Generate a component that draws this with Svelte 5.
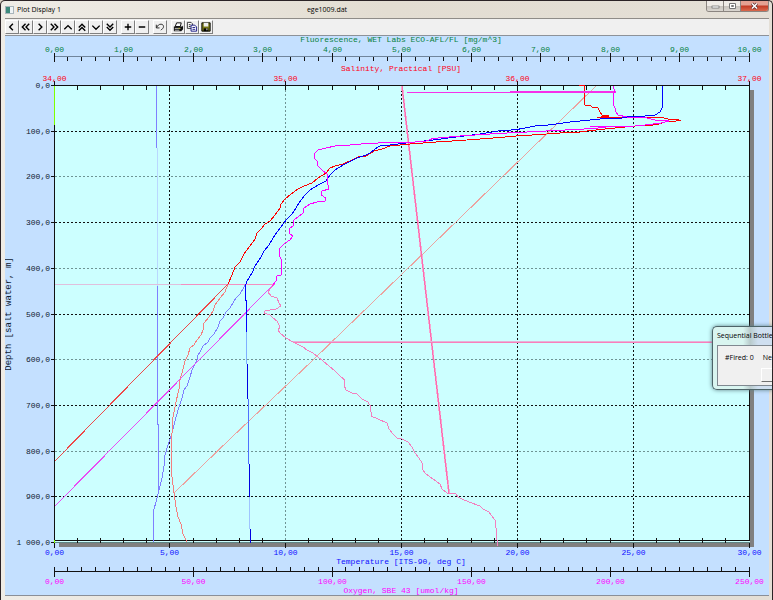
<script lang="ts">
	type Tick = { at: number; major: boolean; label: string };
	type Trace = { color: string; points: string; width?: number };

	// plot frame inside the drawing
	const left = 54.5;
	const right = 749.5;
	const top = 85.5;
	const bottom = 542.5;

	function format(value: number, digits: number) {
		const [whole, part] = value.toFixed(digits).split('.');
		return `${whole.replace(/\B(?=(\d{3})+$)/g, ' ')},${part}`;
	}

	function axis(min: number, max: number, divisions: number, every: number): Tick[] {
		return Array.from({ length: divisions + 1 }, (_, i) => ({
			at: Math.floor(left + ((right - left) * i) / divisions - 0.5) + 0.5,
			major: i % every === 0,
			label: format(min + ((max - min) * i) / divisions, 2)
		}));
	}

	const fluorescence = axis(0, 10, 50, 5);
	const salinity = axis(34, 37, 30, 10);
	const temperature = axis(0, 30, 30, 5);
	const oxygen = axis(0, 250, 50, 10);

	const depths = Array.from({ length: 11 }, (_, i) => ({
		at: Math.round(top + ((bottom - top) * i) / 10 - 0.5) + 0.5,
		label: format(i * 100, 1),
		faint: i > 0 && i % 2 === 0
	}));

	const traces: Trace[] = [
		// pump and time lines
		{ color: '#7f7fff', points: '156.5,86 156.5,148' },
		{ color: '#b9d8ff', points: '157.5,148 157.5,286' },
		{ color: '#7f7fff', points: '157.5,286 157.5,424 158.5,425 158.5,490' },
		{ color: '#e0bfdc', points: '55,284.5 181,284.5' },
		{ color: '#f48fc0', points: '181,284.5 275,284.5' },
		{ color: '#eba3a0', points: '174,493 230,439 313,360 460,218 596,86' },
		// upcast
		{
			color: '#7f7fff',
			points:
				'246,284 240,294 236,298 230,308 226,312 223,318 220,321 218,327 214,334 210,338 208,342 203,346 200,352 198,355 197,360 192,370 190,377 187,386 184,390 182,398 178,410 175,421 172,433 169,442 165,455 164,466 162,478 159,490 156,502 154,509 153,516 153,542'
		},
		{
			color: '#f47f7f',
			points:
				'228,284 225,292 220,298 215,305 213,311 209,317 204,323 203,330 201,335 197,340 194,345 190,348 188,355 185,361 183,369 180,380 179,389 176,402 174,412 172,423 172,433 171,447 171,460 172,477 174,493 176,507 178,517 181,524 183,534 187,542'
		},
		{
			color: '#f47fbf',
			points:
				'275,284 271,288 268,292 271,296 277,298 279,303 281,306 276,309 265,311 264,313 270,315 273,318 277,321 280,327 278,330 280,333 286,338 293,342 299,345 303,347 307,350 313,353 318,357 323,361 329,366 335,371 338,374 341,377 345,380 344,385 346,390 352,393 357,394 362,399 368,402 371,407 370,411 372,413 371,416 378,419 387,423 389,429 393,434 397,438 402,439 408,442 412,447 415,453 419,458 422,463 422,469 426,474 433,479 440,484 442,489 447,493 456,494 458,497 462,499 469,502 480,506 483,509 489,512 492,516 495,520 496,528 497,540 498,546'
		},
		{ color: '#f9a6d0', width: 2, points: '402,86 449,493' },
		{ color: '#fb6cb0', points: '402,86 449,493' },
		{ color: '#f97fbb', points: '293,342.5 753,342.5' },
		{ color: '#e5b3d8', points: '293,341.5 753,341.5' },
		// lines back to the left axis
		{ color: '#ee4848', points: '228,284 55,461' },
		{ color: '#e94cf4', points: '272,286 55,506' },
		// downcast salinity
		{
			color: '#ff0000',
			points:
				'579,85.5 584.5,85.5 584.5,105 591,106 592,107 598,108 600,112 602,115 609,116 597,117.5 662,117.5 668,119 675,119 681,120.5 665,122 659,124 650,125.5 635,126 620,127.5 600,129.5 587,131 577,132.5 560,133 540,134.5 516,136 500,137.5 480,139 460,140.5 436,142 410,144 390,146 382,149 374,151 366,156 358,157 352,160 343,164 335,166 330,168 326,173 318,178 312,183 304,186 298,189 291,194 285,199 281,204 280,208 275,215 270,221 265,224 262,228 257,233 255,239 250,246 246,251 243,256 240,262 235,267 232,275 228,284'
		},
		// downcast temperature
		{
			color: '#0000ff',
			points:
				'662.5,86 662.5,107 660,112 655,115 645,116 632,116 622,118 608,118 596,119.5 585,120.5 570,122 560,123.5 548,125 540,125 530,127 517,129.5 498,131 480,134 460,136.5 433,140 415,142 402,143.5 390,145 380,146 375,149 370,153 366,155 357,158 351,161 343,165 335,170 330,175 326,181 318,185 310,190 304,196 299,203 296,208 292,214 287,219 284,223 277,232 273,238 269,245 264,251 261,257 255,266 252,273 247,281 245.5,285 245.5,300 246.5,301 246.5,332'
		},
		{ color: '#7fafff', points: '246.5,332 246.5,364' },
		{ color: '#0000e0', points: '247.5,364 247.5,399' },
		{ color: '#5070ff', points: '248.5,399 248.5,464' },
		{ color: '#0000e0', points: '249.5,464 249.5,497' },
		{ color: '#9fc4ff', points: '249.5,497 249.5,529' },
		{ color: '#0000e0', points: '250.5,529 250.5,543' },
		// downcast oxygen
		{ color: '#f531e8', points: '407,92.5 616,92.5' },
		{ color: '#f531e8', points: '510,91.5 616,91.5' },
		{
			color: '#ff00ff',
			points:
				'613.5,86 614.5,91 613.5,96 613.5,105 615,108 616,112 618,115 627,117 647,118 655,120 669,121 661,123 645,125 635,126 590,126.5 606,127.5 590,128.5 579,129.5 552,130.5 540,131.5 515,132.5 490,134 460,136 433,138.5 426,141 410,142.5 390,142.5 367,143.5 350,145 335,146 326,148 318,150 314,154 314,158 317,161 317,165 322,170 327,174 327,181 329,189 322,191 321,195 326,198 325,201 317,202 310,204 304,208 303,213 298,217 294,220 293,226 289,229 290,234 293,236 290,240 285,243 279,249 279,255 281,259 281,275 277,276 276,281 272,286'
		}
	];

	const groups = [
		['back', 'fastback', 'forward', 'fastforward', 'up', 'fastup', 'down', 'fastdown'],
		['plus', 'minus'],
		['undo'],
		['print', 'copy', 'save']
	];

	const names: Record<string, string> = {
		back: 'Scroll left',
		fastback: 'Scroll left fast',
		forward: 'Scroll right',
		fastforward: 'Scroll right fast',
		up: 'Scroll up',
		fastup: 'Scroll up fast',
		down: 'Scroll down',
		fastdown: 'Scroll down fast',
		plus: 'Zoom in',
		minus: 'Zoom out',
		undo: 'Undo zoom',
		print: 'Print',
		copy: 'Copy',
		save: 'Save'
	};

	const strokes: Record<string, string> = {
		back: 'M7.5 3 4 6.5l3.500 3.500',
		fastback: 'M6 3 2.500 6.500 6 10M10 3 6.500 6.500 10 10',
		forward: 'M5 3l3.500 3.500L5 10',
		fastforward: 'M3 3l3.500 3.500L3 10M7 3l3.500 3.500L7 10',
		up: 'M2.500 9 6.500 5l4 4',
		fastup: 'M3 7 6.500 3.500 10 7M3 10.500 6.500 7l3.500 3.500',
		down: 'M2.500 5l4 4 4-4',
		fastdown: 'M3 3l3.500 3.500L10 3M3 6.500 6.500 10 10 6.500',
		plus: 'M6.500 3v7M3 6.500h7',
		minus: 'M3 6.500h7'
	};
</script>

<main class="window">
	<header class="titlebar">
		<svg class="appicon" viewBox="0 0 9 8" aria-hidden="true">
			<rect width="9" height="8" fill="#a9b5bb" />
			<rect x="1" y="1" width="4" height="6" fill="#3c8a7c" />
			<rect x="5" y="1" width="3" height="6" fill="#eef3f5" />
		</svg>
		<h1>Plot Display 1</h1>
		<span class="file">ege1009.dat</span>
		<div class="controls">
			<button class="control" aria-label="Minimize">
				<svg viewBox="0 0 9 8"><rect x="1" y="4" width="7" height="2" fill="#fff" stroke="#555" stroke-width=".6" /></svg>
			</button>
			<button class="control" aria-label="Restore">
				<svg viewBox="0 0 9 8"><path d="M1.500 1.500h6v5h-6z" fill="#fff" stroke="#777" /><path d="M3.500 3.500h2v1h-2z" fill="none" stroke="#777" /></svg>
			</button>
			<button class="control control--close" aria-label="Close">
				<svg viewBox="0 0 9 8"><path d="M2 1.500l5 5M7 1.500l-5 5" stroke="#5b2a2a" stroke-width="3" /><path d="M2 1.500l5 5M7 1.500l-5 5" stroke="#fff" stroke-width="1.600" /></svg>
			</button>
		</div>
	</header>

	<div class="toolbar" role="toolbar" aria-label="Plot tools">
		{#each groups as group}
			<div class="group">
				{#each group as name}
					<button class="tool" aria-label={names[name]}>
						<svg viewBox="0 0 13 13" aria-hidden="true">
							{#if strokes[name]}
								<path d={strokes[name]} fill="none" stroke="#000" stroke-width="1.500" />
							{:else if name === 'undo'}
								<path d="M2.500 4v3.500H6M2.800 7.200C4 4.500 5.500 3.500 7.500 3.500 10.500 3.500 11 6.500 9.500 8L7.500 10" fill="none" stroke="#222" />
							{:else if name === 'print'}
								<path d="M5 2h5L9 6H3.500z" fill="#fff" stroke="#000" />
								<path d="M2 6h9l1-1v4l-2 2H2z" fill="#111" />
								<path d="M3 8h6M3 10h5" stroke="#c9c9c9" />
								<path d="M7 8h2" stroke="#b5b520" />
							{:else if name === 'copy'}
								<path d="M1.500 1.500h4l1.500 1.500v5H1.500z" fill="#fff" stroke="#333" />
								<path d="M3 4h2M3 6h2" stroke="#222" />
								<path d="M5.500 4.500h4L11.500 6.500v4.500h-6z" fill="#fff" stroke="#101080" />
								<path d="M7 7h3M7 9h3" stroke="#101080" />
							{:else}
								<path d="M2 2h9v9H2z" fill="#777716" stroke="#000" />
								<rect x="4" y="2" width="5" height="4" fill="#eee" />
								<rect x="4" y="8" width="5" height="3" fill="#000" />
								<rect x="7" y="8" width="1" height="2" fill="#fff" />
							{/if}
						</svg>
					</button>
				{/each}
			</div>
		{/each}
	</div>

	<section class="plot">
		<svg class="chart" viewBox="5 36 764 559" role="img" aria-label="CTD profile against depth">
			<g shape-rendering="crispEdges">
				<path d="M59 543h691V90h4v457H59z" fill="#808080" />
				<rect x="54" y="85" width="696" height="458" fill="#ccffff" />

				<g class="grid">
					{#each depths.slice(1, 10) as depth}
						<line class:faint={depth.faint} x1={left} x2={right} y1={depth.at} y2={depth.at} />
					{/each}
					{#each temperature.filter((t) => t.major).slice(1, 6) as tick, i}
						<line class:faint={i === 1} x1={tick.at} x2={tick.at} y1={top} y2="540" />
					{/each}
				</g>

				<line x1="54" x2="750" y1="542.5" y2="542.5" stroke="#5f8585" />

				<g class="rules">
					<path class="soft" d="M54 56.5H750" />
					{#each fluorescence as tick}
						<line x1={tick.at} x2={tick.at} y1={tick.major ? 53 : 57} y2={tick.major ? 62 : 61} />
					{/each}
					<path d="M54 85.500H750M749.500 85V541" />
					{#each salinity as tick}
						<line x1={tick.at} x2={tick.at} y1={tick.major ? 81 : 86} y2="90" />
					{/each}
					<path d="M54.500 85V548M54 540.500H750" />
					{#each temperature as tick}
						<line x1={tick.at} x2={tick.at} y1={tick.major ? 543 : 538} y2={tick.major ? 548 : 543} />
					{/each}
					<path d="M54 571.500H750" />
					{#each oxygen as tick}
						<line x1={tick.at} x2={tick.at} y1="567" y2={tick.major ? 577 : 571} />
					{/each}
					{#each depths as depth}
						<line x1="51" x2="54" y1={depth.at} y2={depth.at} />
					{/each}
				</g>

				{#each traces as trace}
					<polyline points={trace.points} fill="none" stroke={trace.color} stroke-width={trace.width ?? 1} />
				{/each}
				<path d="M54.500 86V125M54.500 540V543" stroke="#7fff00" />
			</g>

			<g class="labels labels--green">
				<text x="401" y="42">Fluorescence, WET Labs ECO-AFL/FL [mg/m^3]</text>
				{#each fluorescence.filter((t) => t.major) as tick}
					<text x={tick.at} y="52">{tick.label}</text>
				{/each}
			</g>
			<g class="labels labels--red">
				<text x="401" y="71">Salinity, Practical [PSU]</text>
				{#each salinity.filter((t) => t.major) as tick}
					<text x={tick.at} y="81">{tick.label}</text>
				{/each}
			</g>
			<g class="labels labels--blue">
				{#each temperature.filter((t) => t.major) as tick}
					<text x={tick.at} y="555">{tick.label}</text>
				{/each}
				<text x="401" y="564">Temperature [ITS-90, deg C]</text>
			</g>
			<g class="labels labels--magenta">
				{#each oxygen.filter((t) => t.major) as tick}
					<text x={tick.at} y="584">{tick.label}</text>
				{/each}
				<text x="401" y="593">Oxygen, SBE 43 [umol/kg]</text>
			</g>
			<g class="labels labels--depth">
				{#each depths as depth}
					<text x="50" y={depth.at + 2.5}>{depth.label}</text>
				{/each}
			</g>
			<text class="depth" transform="translate(11 314) rotate(-90)">Depth [salt water, m]</text>
		</svg>

		<aside class="dialog">
			<h2>Sequential Bottle</h2>
			<div class="dialog__body">
				<div class="dialog__row">
					<span>#Fired: 0</span>
					<span>Ne</span>
				</div>
				<button class="fire" aria-label="Fire bottle"></button>
			</div>
		</aside>
	</section>
</main>

<style>
	:global(body) {
		margin: 0;
		background: #d8d0c4;
	}

	.window {
		box-sizing: border-box;
		position: relative;
		overflow: hidden;
		padding: 0 3px 4px 4px;
		border: 1px solid #2b2326;
		border-bottom: 0;
		border-radius: 5px 5px 0 0;
		background: linear-gradient(90deg, #efece6, #e3ddd2 50%, #e4dfd6);
		font-family: 'Open Sans', 'Noto Sans', sans-serif;
		font-size: 7px;
		color: #000;
	}

	.titlebar {
		display: grid;
		grid-template-columns: 9px 1fr auto 1fr;
		align-items: center;
		gap: 3px;
		height: 17px;
		border-bottom: 1px solid #8f8c88;
	}
	.appicon {
		width: 9px;
		height: 8px;
	}
	h1,
	h2 {
		margin: 0;
		font-size: 7px;
		font-weight: 400;
		line-height: 10px;
		white-space: nowrap;
	}
	.file {
		margin-right: 132px;
	}
	.controls {
		position: absolute;
		top: 0;
		right: 3px;
		display: flex;
		border: 1px solid #8b8580;
		border-top: 0;
		border-radius: 0 0 3px 3px;
		overflow: hidden;
	}
	.control {
		display: grid;
		place-items: center;
		width: 17px;
		height: 10px;
		padding: 0;
		border: 0;
		border-right: 1px solid #8b8580;
		background: linear-gradient(#efebe6 45%, #c7c2bc 50%, #dad6d0);
	}
	.control svg {
		width: 9px;
		height: 8px;
	}
	.control--close {
		width: 27px;
		border-right: 0;
		background: linear-gradient(#e4a192 40%, #c23b25 50%, #d9694d);
	}

	.toolbar {
		display: flex;
		gap: 4px;
		height: 16px;
		align-items: center;
		border-bottom: 1px solid #8d9299;
		background: #f0f0f0;
	}
	.group {
		display: flex;
	}
	.tool {
		box-sizing: border-box;
		width: 14px;
		height: 14px;
		padding: 0;
		border: 1px solid;
		border-color: #fff #808080 #808080 #fff;
		background: #f0f0f0;
	}
	.tool svg {
		display: block;
		width: 12px;
		height: 12px;
	}

	.plot {
		position: relative;
		background: #c4e0ff;
		border-bottom: 1px solid #8a8f98;
	}
	.chart {
		display: block;
		width: 100%;
	}
	.grid line {
		stroke: #111;
		stroke-dasharray: 2 2;
	}
	.grid .faint {
		stroke: #6f9494;
	}
	.rules {
		stroke: #111;
	}
	.rules .soft {
		stroke: #70859c;
	}
	.labels {
		font-family: 'Liberation Mono', monospace;
		font-size: 8px;
		text-anchor: middle;
	}
	.labels--green {
		fill: #078040;
	}
	.labels--red {
		fill: #ff0018;
	}
	.labels--blue {
		fill: #1010ff;
	}
	.labels--magenta {
		fill: #ff00ff;
	}
	.labels--depth {
		fill: #102030;
		text-anchor: end;
	}
	.depth {
		font-family: 'Liberation Mono', monospace;
		font-size: 9px;
		text-anchor: middle;
		fill: #102030;
	}

	/* floats over the right edge and runs off the screen */
	.dialog {
		box-sizing: border-box;
		position: absolute;
		top: 290px;
		right: -4px;
		width: 61px;
		height: 64px;
		padding: 4px 0 4px 4px;
		border: 1px solid #4d6468;
		border-right: 0;
		border-radius: 5px 0 0 5px;
		overflow: hidden;
		background: linear-gradient(90deg, #d9f5f0 50%, #b9cbcc 62%, #cfdff0 75%);
		box-shadow: 0 0 4px #5f7f86;
	}
	.dialog__body {
		height: 39px;
		margin-top: 4px;
		border: 1px solid #808890;
		border-right: 0;
		background: #f0f0f0;
	}
	.dialog__row {
		display: flex;
		gap: 9px;
		padding: 7px 0 5px 7px;
		line-height: 10px;
		white-space: nowrap;
	}
	.fire {
		display: block;
		width: 40px;
		height: 14px;
		margin-left: 43px;
		padding: 0;
		border: 1px solid;
		border-color: #fff #707070 #707070 #fff;
		background: #f0f0f0;
	}
</style>
